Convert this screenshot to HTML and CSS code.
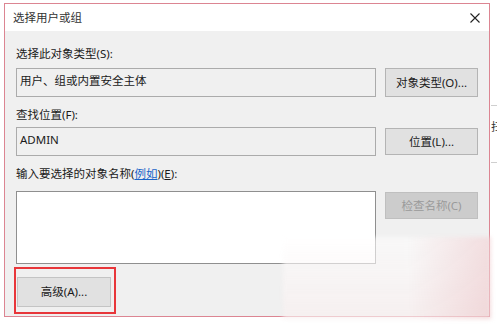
FILE: index.html
```html
<!DOCTYPE html>
<html lang="zh-CN">
<head>
<meta charset="utf-8">
<title>选择用户或组</title>
<link rel="stylesheet" href="styles.css">
</head>
<body>
<div class="screen">
  <div class="dialog">
    <div class="titlebar">
      <span class="title">选择用户或组</span>
      <svg class="close" width="10" height="10" viewBox="0 0 10 10"><path d="M0.5 0.5 L9.5 9.5 M9.5 0.5 L0.5 9.5" stroke="#222" stroke-width="1.1" fill="none"/></svg>
    </div>
    <div class="body">
      <div class="label l1">选择此对象类型(S):</div>
      <div class="row r1">
        <div class="field">用户、组或内置安全主体</div>
        <div class="btn">对象类型(O)...</div>
      </div>
      <div class="label l2">查找位置(F):</div>
      <div class="row r2">
        <div class="field">ADMIN</div>
        <div class="btn">位置(L)...</div>
      </div>
      <div class="label l3">输入要选择的对象名称(<span class="link">例如</span>)(<u>E</u>):</div>
      <div class="row r3">
        <div class="textarea"></div>
        <div class="btn disabled">检查名称(C)</div>
      </div>
      <div class="highlight">
        <div class="btn adv">高级(A)...</div>
      </div>
    </div>
    <div class="watermark"></div>
  </div>
  <div class="side">
    <div class="side-item">扫</div>
  </div>
</div>
</body>
</html>
```

FILE: styles.css
```css
html, body {
  margin: 0;
  padding: 0;
  background: #ffffff;
}
body {
  width: 497px;
  height: 325px;
  overflow: hidden;
  font-family: "Noto Sans", "Noto Sans CJK SC", sans-serif;
  font-size: 11.5px;
  color: #1a1a1a;
}
.screen {
  display: flex;
  padding: 3px 0 0 4px;
}
.dialog {
  position: relative;
  width: 485px;
  height: 312px;
  border: 1px solid #dc8592;
  background: #f0f0f0;
  display: flex;
  flex-direction: column;
}
.titlebar {
  height: 27px;
  background: #ffffff;
  display: flex;
  align-items: center;
  justify-content: space-between;
  padding: 0 9px 0 8px;
}
.title {
  font-size: 11.5px;
  color: #333;
  line-height: 14px;
}
.close {
  display: block;
  margin-top: 1px;
}
.body {
  flex: 1;
  padding: 0 0 0 11px;
}
.label {
  height: 14px;
  line-height: 14px;
  white-space: nowrap;
}
.l1 { margin-top: 16px; }
.l2 { margin-top: 11px; }
.l3 { margin-top: 11px; }
.link {
  color: #1a64c8;
  text-decoration: underline;
}
.row {
  display: flex;
  gap: 9px;
  align-items: flex-start;
}
.r1 { margin-top: 7px; }
.r2 { margin-top: 5px; }
.r3 { margin-top: 10px; }
.field {
  box-sizing: border-box;
  width: 360px;
  height: 29px;
  border: 1px solid #ababab;
  background: #f0f0f0;
  padding: 5px 3px 0;
  line-height: 14px;
}
.btn {
  box-sizing: border-box;
  width: 93px;
  height: 29px;
  border: 1px solid #b4b4b4;
  background: #e1e1e1;
  display: flex;
  align-items: center;
  justify-content: center;
  line-height: 14px;
  white-space: nowrap;
}
.r2 .btn { margin-top: 1px; height: 27px; }
.textarea {
  box-sizing: border-box;
  width: 360px;
  height: 73px;
  border: 1px solid #8f8f8f;
  background: #ffffff;
}
.btn.disabled {
  margin-top: 1px;
  height: 27px;
  background: #cccccc;
  border-color: #bfbfbf;
  color: #9a9a9a;
}
.highlight {
  box-sizing: border-box;
  width: 102px;
  height: 47px;
  margin: 3px 0 0 -2px;
  border: 2px solid #e8363a;
  padding: 8px 0 0 1px;
}
.btn.adv {
  width: 94px;
  height: 30px;
  background: #e1e1e1;
  border-color: #c4c4c4;
}
.watermark {
  position: absolute;
  left: 278px;
  top: 233px;
  width: 208px;
  height: 82px;
  background:
    linear-gradient(90deg, rgba(255,255,255,0) 0%, rgba(255,255,255,0) 60%, rgba(230,170,175,0.35) 100%),
    linear-gradient(180deg, rgba(255,255,255,0.55) 0%, rgba(248,240,240,0.75) 100%);
  filter: blur(2px);
}
.side {
  width: 6px;
  margin-left: 1px;
  overflow: hidden;
}
.side-item {
  margin-top: 102px;
  height: 58px;
  border-top: 1px solid #cfcfcf;
  border-bottom: 1px solid #cfcfcf;
  font-size: 11px;
  line-height: 14px;
  padding-top: 14px;
  box-sizing: border-box;
  color: #333;
}
```
